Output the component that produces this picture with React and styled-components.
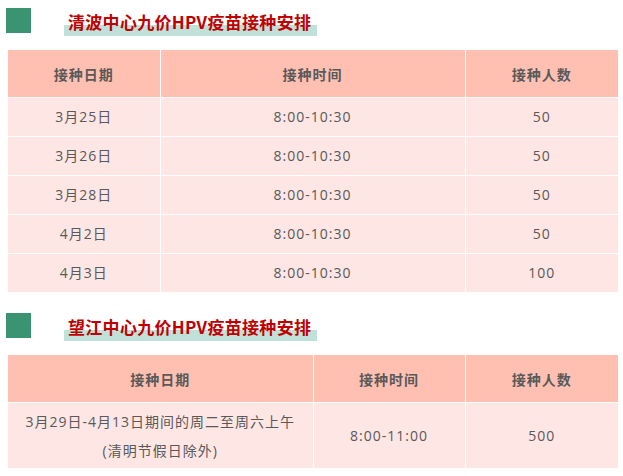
import React from 'react'
import styled, { createGlobalStyle } from 'styled-components'

const GlobalStyle = createGlobalStyle`
  body {
    margin: 0;
    background: #fff;
    font-family: "Open Sans", "Noto Sans CJK SC", sans-serif;
  }
`

const Page = styled.div`
  width: 623px;
  padding-top: 8px;
`

const Heading = styled.div`
  display: flex;
  align-items: flex-start;
  height: 28px;
  padding-left: 6px;
  margin-top: ${p => p.$top || 0}px;
`

const Square = styled.div`
  width: 25px;
  height: 25px;
  background: #3a9471;
  flex: none;
`

const Title = styled.h2`
  margin: 0 0 0 33px;
  padding: 0 6px 0 4px;
  height: 28px;
  line-height: 28px;
  font-family: "Noto Sans CJK SC", sans-serif;
  font-size: 17px;
  font-weight: bold;
  color: #c00000;
  letter-spacing: 0.3px;
  background: linear-gradient(to bottom, transparent 17px, #c0e0da 17px);
`

const Table = styled.table`
  margin: 14px 0 0 8px;
  width: 610px;
  table-layout: fixed;
  border-collapse: collapse;
  font-size: 14px;
  letter-spacing: 1px;
  color: #595959;
  text-align: center;
`

const Head = styled.th`
  height: 47px;
  padding: 0;
  background: #ffc0b2;
  font-weight: bold;
  border: 1px solid #fff;
  border-top: 0;
  font-family: "Noto Sans CJK SC", sans-serif;
  &:first-child { border-left: 0; }
  &:last-child { border-right: 0; }
`

const Cell = styled.td`
  height: ${p => p.$h || 38}px;
  padding: 0;
  background: #fde6e3;
  border: 1px solid #fff;
  line-height: ${p => p.$lh || 20}px;
  &:first-child { border-left: 0; }
  &:last-child { border-right: 0; }
  tr:last-child & { border-bottom: 0; }
`

const rows1 = [
  ['3月25日', '8:00-10:30', '50'],
  ['3月26日', '8:00-10:30', '50'],
  ['3月28日', '8:00-10:30', '50'],
  ['4月2日', '8:00-10:30', '50'],
  ['4月3日', '8:00-10:30', '100'],
]

export default function App() {
  return (
    <Page>
      <GlobalStyle />
      <Heading>
        <Square />
        <Title>清波中心九价HPV疫苗接种安排</Title>
      </Heading>
      <Table>
        <colgroup>
          <col style={{ width: 152 }} />
          <col style={{ width: 305 }} />
          <col style={{ width: 153 }} />
        </colgroup>
        <thead>
          <tr>
            <Head>接种日期</Head>
            <Head>接种时间</Head>
            <Head>接种人数</Head>
          </tr>
        </thead>
        <tbody>
          {rows1.map(r => (
            <tr key={r[0]}>
              {r.map((c, i) => (
                <Cell key={i}>{c}</Cell>
              ))}
            </tr>
          ))}
        </tbody>
      </Table>

      <Heading $top={21}>
        <Square />
        <Title>望江中心九价HPV疫苗接种安排</Title>
      </Heading>
      <Table>
        <colgroup>
          <col style={{ width: 305 }} />
          <col style={{ width: 152 }} />
          <col style={{ width: 153 }} />
        </colgroup>
        <thead>
          <tr>
            <Head>接种日期</Head>
            <Head>接种时间</Head>
            <Head>接种人数</Head>
          </tr>
        </thead>
        <tbody>
          <tr>
            <Cell $h={65} $lh={29}>
              3月29日-4月13日期间的周二至周六上午
              <br />
              (清明节假日除外)
            </Cell>
            <Cell $h={65}>8:00-11:00</Cell>
            <Cell $h={65}>500</Cell>
          </tr>
        </tbody>
      </Table>
    </Page>
  )
}
